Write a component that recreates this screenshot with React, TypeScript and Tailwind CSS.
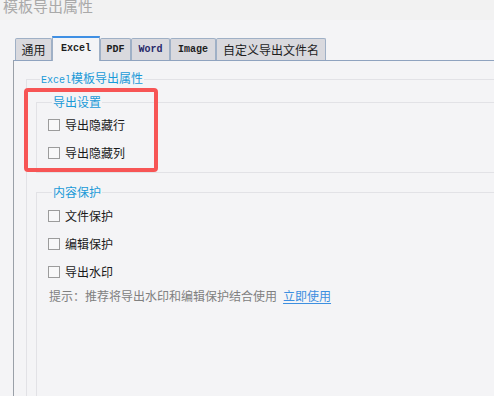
import React from 'react';

const cjk = "font-['Noto_Sans_CJK_SC','Noto_Sans',sans-serif]";
const mono = "font-['Liberation_Mono',monospace]";

const Check: React.FC<{ label: string }> = ({ label }) => (
  <div className="flex items-center h-[20px]">
    <span className="w-[12px] h-[12px] border border-[#9c9c9c] bg-[#f8f8f9]" />
    <span className="ml-[5px] text-[#1a1a1a]">{label}</span>
  </div>
);

const Tab: React.FC<{ w: string; active?: boolean; children: React.ReactNode }> = ({ w, active, children }) => (
  <div
    className={
      active
        ? `${w} h-[25px] -mb-px relative z-10 bg-[#f4f4f6] border-x border-[#9fb0c6] border-t-2 border-t-[#3f8fe4] flex items-center justify-center pb-[3px]`
        : `${w} h-[22px] bg-[#d9d9de] border-x border-t border-[#9fb0c6] rounded-t-[2px] flex items-center justify-center`
    }
  >
    {children}
  </div>
);

export default function App() {
  return (
    <div className={`w-[494px] h-[396px] overflow-hidden bg-[#f4f4f6] relative flex flex-col text-[12px] ${cjk}`}>
      {/* title, clipped at top */}
      <div className="h-[20px] bg-[#f2f2f2] pl-[3px] overflow-hidden shrink-0">
        <div className="-mt-[2px] text-[15px] leading-[15px] text-[#a9a9a9]">模板导出属性</div>
      </div>

      {/* tabs */}
      <div className="flex items-end ml-[15px] mt-[16px] h-[24px] shrink-0 text-[#1e1e1e]">
        <Tab w="w-[37px]">通用</Tab>
        <Tab w="w-[48px]" active>
          <span className={`${mono} text-[10px] font-bold`}>Excel</span>
        </Tab>
        <Tab w="w-[31px]">
          <span className={`${mono} text-[10px] font-bold`}>PDF</span>
        </Tab>
        <Tab w="w-[39px]">
          <span className={`${mono} text-[10px] font-bold text-[#2a2a6a]`}>Word</span>
        </Tab>
        <Tab w="w-[46px]">
          <span className={`${mono} text-[10px] font-bold`}>Image</span>
        </Tab>
        <Tab w="w-[110px]">自定义导出文件名</Tab>
      </div>

      {/* panel */}
      <div className="ml-[13px] flex-1 border-l border-t border-l-[#9aa0a8] border-t-[#8fa3bf] pl-[12px] pt-[9px]">
        <fieldset className="border-l border-t border-[#e2e2e6] pl-[9px] h-[340px]">
          <legend className="ml-[4px] px-[1px] leading-[16px] text-[#1a9ad8]">
            <span className={`${mono} text-[10px]`}>Excel</span>模板导出属性
          </legend>

          <fieldset className="mt-[5px] border-l border-t border-b border-[#e2e2e6] pl-[11px] pt-[5px] pb-[9px]">
            <legend className="ml-[4px] px-[1px] leading-[16px] text-[#1a9ad8]">导出设置</legend>
            <div className="flex flex-col gap-[8px]">
              <Check label="导出隐藏行" />
              <Check label="导出隐藏列" />
            </div>
          </fieldset>

          <fieldset className="mt-[11px] border-l border-t border-[#e2e2e6] pl-[11px] pt-[6px] h-[220px]">
            <legend className="ml-[4px] px-[1px] leading-[16px] text-[#1a9ad8]">内容保护</legend>
            <div className="flex flex-col gap-[8px]">
              <Check label="文件保护" />
              <Check label="编辑保护" />
              <Check label="导出水印" />
            </div>
            <div className="mt-[4px] h-[20px] flex items-center pl-[1px] text-[#808080]">
              提示：推荐将导出水印和编辑保护结合使用
              <span className="ml-[6px] text-[#3d8fe0] underline underline-offset-[2px]">立即使用</span>
            </div>
          </fieldset>
        </fieldset>
      </div>

      {/* annotation box */}
      <div className="absolute left-[24px] top-[88px] w-[134px] h-[84px] border-[4px] border-[#f75555] rounded-[4px]" />
    </div>
  );
}
